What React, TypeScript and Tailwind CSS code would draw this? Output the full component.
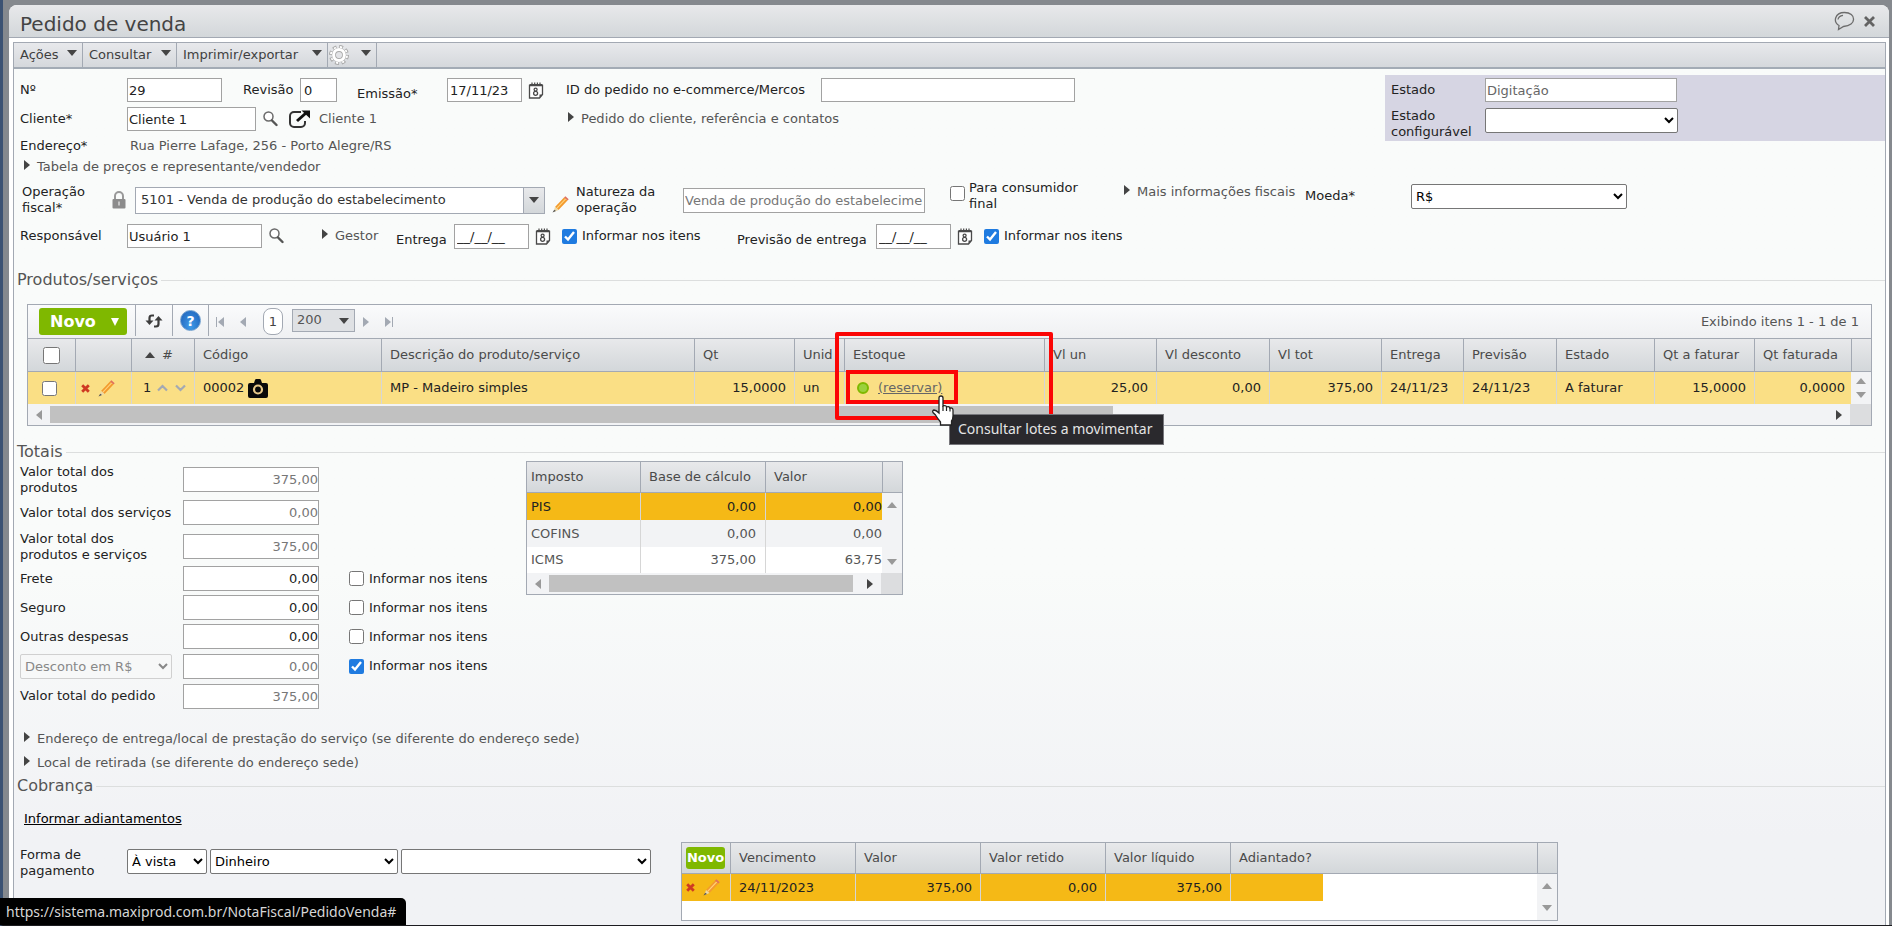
import type { ReactNode } from 'react';

const FIELD = 'border border-[#a2a2a2] bg-white px-px text-[13px] leading-4 text-[#222]';
const SELECT = 'h-[25px] rounded-[2px] border border-[#767676] bg-white text-[13px] text-black';
const CHECK = 'm-0 size-[15px] shrink-0 accent-[#1f7be0]';
const HEAD = 'border-b border-[#a3a9b3] bg-linear-to-b from-[#e8e9eb] to-[#d3d7da] text-left font-normal text-[#4a4a4a]';

/* ---------- icons ---------- */

function Calendar() {
  return (
    <svg width="16" height="17" viewBox="0 0 16 17" fill="none" className="shrink-0">
      <path d="M1.500 3.500h13v9l-3 3.500h-10z" fill="#fff" stroke="#4a4a4a" strokeWidth="1.300" />
      <path d="M1.500 3h13" stroke="#4a4a4a" strokeWidth="2" />
      <path d="M4 .5v3M6.700 .5v3M9.400 .5v3M12 .5v3" stroke="#4a4a4a" strokeWidth="1.200" />
      <path d="M11.500 16v-3.500h3z" fill="#4a4a4a" />
      <circle cx="7.600" cy="7.600" r="1.500" stroke="#4a4a4a" strokeWidth="1.300" />
      <circle cx="7.600" cy="11.300" r="2" stroke="#4a4a4a" strokeWidth="1.300" />
    </svg>
  );
}

function Search() {
  return (
    <svg width="15" height="16" viewBox="0 0 15 16" fill="none" className="shrink-0">
      <circle cx="5.500" cy="5.500" r="4.500" fill="#fff" stroke="#6a6a6a" strokeWidth="1.500" />
      <path d="M9 9.500l4.500 4.500" stroke="#555" strokeWidth="2.400" strokeLinecap="round" />
    </svg>
  );
}

function OpenExternal() {
  return (
    <svg width="22" height="18" viewBox="0 0 22 18" fill="none" className="shrink-0">
      <path d="M12 2H5a4 4 0 0 0-4 4v7a4 4 0 0 0 4 4h7a4 4 0 0 0 4-4v-2" stroke="#333" strokeWidth="2" />
      <path d="M8 11l9-8" stroke="#111" strokeWidth="3" />
      <path d="M12.500 .5H21v8z" fill="#111" />
    </svg>
  );
}

function Pencil() {
  return (
    <svg width="17" height="17" viewBox="0 0 17 17" className="shrink-0">
      <path d="M3 11L12 1.500l3.500 3L6.500 14z" fill="#f39a2d" />
      <path d="M4.700 12.300l9-9.500" stroke="#ffd27a" strokeWidth="1.200" />
      <path d="M12 1.500l1.400-1.200 3.300 2.900-1.200 1.300z" fill="#e0705c" />
      <path d="M3 11l3.500 3-5 2z" fill="#ecd9a8" />
      <path d="M2.200 13.700L4 15l-3.500 1.500z" fill="#555" />
    </svg>
  );
}

function Lock() {
  return (
    <svg width="14" height="18" viewBox="0 0 14 18" fill="none" className="shrink-0">
      <path d="M3 9V5a4 4 0 0 1 8 0v4" stroke="#999" strokeWidth="2" />
      <rect x=".5" y="8" width="13" height="9.500" rx="1" fill="#8c8c8c" />
      <path d="M7 10.500v4" stroke="#d8d8d8" strokeWidth="1.500" />
    </svg>
  );
}

function Gear() {
  return (
    <svg width="20" height="20" viewBox="0 0 20 20" fill="none" className="shrink-0">
      <circle cx="10" cy="10" r="8" stroke="#a8a8a8" strokeWidth="4" strokeDasharray="3.640 2.640" />
      <circle cx="10" cy="10" r="7.500" stroke="#fff" strokeWidth="3" strokeDasharray="2.040 3.850" strokeDashoffset="-.7" />
      <circle cx="10" cy="10" r="5.200" fill="#e2e3e6" stroke="#a8a8a8" strokeWidth="4.200" />
      <circle cx="10" cy="10" r="5.400" stroke="#fff" strokeWidth="3" />
    </svg>
  );
}

function Refresh() {
  return (
    <svg width="18" height="14" viewBox="0 0 18 14" fill="none" className="shrink-0">
      <path d="M9 1.500H7Q4.500 1.500 4.500 4v5" stroke="#3c3c3c" strokeWidth="2.200" />
      <path d="M.5 6.500h8L4.500 11z" fill="#3c3c3c" />
      <path d="M9 12.500h2q2.500 0 2.500-2.500V5" stroke="#3c3c3c" strokeWidth="2.200" />
      <path d="M9.500 6.500h8L13.500 2z" fill="#3c3c3c" />
    </svg>
  );
}

function Camera() {
  return (
    <svg width="20" height="19" viewBox="0 0 20 19" className="shrink-0">
      <path d="M2 4h4l1-3q.3-1 1.300-1h3.400q1 0 1.300 1l1 3h4q2 0 2 2v11q0 2-2 2H2q-2 0-2-2V6q0-2 2-2z" fill="#0a0a0a" />
      <circle cx="10" cy="10.500" r="4" fill="#0a0a0a" stroke="#e8c98a" strokeWidth="2.200" />
    </svg>
  );
}

function RedX() {
  return (
    <svg width="9" height="9" viewBox="0 0 9 9" className="shrink-0">
      <path d="M1.200 1.200l6.600 6.600M7.800 1.200L1.200 7.800" stroke="#cf3a22" strokeWidth="2.800" />
    </svg>
  );
}

function Tri({ dir, color = '#444' }: { dir: 'left' | 'right' | 'up' | 'down'; color?: string }) {
  const paths = { left: 'M6 0v10L0 5z', right: 'M0 0v10l6-5z', up: 'M0 6h10L5 0z', down: 'M0 0h10L5 6z' };
  const wide = dir === 'up' || dir === 'down';
  return (
    <svg width={wide ? 10 : 6} height={wide ? 6 : 10} viewBox={wide ? '0 0 10 6' : '0 0 6 10'} className="shrink-0">
      <path d={paths[dir]} fill={color} />
    </svg>
  );
}

function Hand() {
  return (
    <svg width="24" height="31" viewBox="0 0 24 31" className="pointer-events-none absolute top-[23px] left-[86px] z-30">
      <path
        d="M8 18V3q0-2 2-2t2 2v8q3-1 3.500 1 3-1 3.500 1.200 3-.8 3 2V21q0 3-1.500 5v4H9.500v-3Q7 24 4.500 20L2 17.500q-1-2 1-2.500 2 0 5 3z"
        fill="#fff"
        stroke="#222"
        strokeWidth="1.300"
      />
      <path d="M12 11v5M15.500 12v4M19 13v3.500" stroke="#222" strokeWidth="1.200" />
    </svg>
  );
}

/* ---------- building blocks ---------- */

function MenuButton({ children, width }: { children: ReactNode; width: string }) {
  return (
    <button className={'flex items-center justify-between border-r border-[#a3a9b3] pr-[5px] pl-[6px] text-[#3f3f3f] ' + width}>
      {children}
      <span className="-mt-1">
        <Tri dir="down" />
      </span>
    </button>
  );
}

function Expander({ children }: { children: ReactNode }) {
  return (
    <button className="flex items-center gap-[7px] whitespace-nowrap text-[#555]">
      <span className="-mt-1">
        <Tri dir="right" />
      </span>
      {children}
    </button>
  );
}

function InformarNosItens({ checked = false }: { checked?: boolean }) {
  return (
    <label className="flex w-[144px] items-center gap-[5px] whitespace-nowrap">
      <input type="checkbox" defaultChecked={checked} className={CHECK} />
      Informar nos itens
    </label>
  );
}

function Legend({ children, className }: { children: ReactNode; className: string }) {
  return (
    <h2 className={'flex h-6 items-center gap-[3px] pl-[3px] text-base text-[#555] ' + className}>
      {children}
      <span className="h-px flex-1 bg-[#dcdede]" />
    </h2>
  );
}

function HScroll({ thumb }: { thumb: string }) {
  return (
    <div className="flex h-[21px] bg-[#f2f3f5]">
      <div className="flex flex-1 items-center gap-2 px-2">
        <Tri dir="left" color="#999" />
        <div className="h-[17px] flex-1">
          <div className={'h-full bg-[#c1c1c1] ' + thumb} />
        </div>
        <Tri dir="right" />
      </div>
      <div className="w-[21px] bg-[#dcdddf]" />
    </div>
  );
}

function VScroll({ className = '' }: { className?: string }) {
  return (
    <div className={'flex flex-col items-center justify-between ' + className}>
      <Tri dir="up" color="#999" />
      <Tri dir="down" color="#999" />
    </div>
  );
}

/* ---------- header fields ---------- */

function OrderHeader() {
  return (
    <section>
      <div className="flex items-start justify-between">
        <div className="pt-[9px] pl-[6px]">
          <div className="flex h-6 items-center">
            <label htmlFor="numero" className="w-[107px]">Nº</label>
            <input id="numero" defaultValue="29" className={FIELD + ' h-6 w-[95px]'} />
            <label htmlFor="revisao" className="ml-[21px] w-[57px]">Revisão</label>
            <input id="revisao" defaultValue="0" className={FIELD + ' h-6 w-[37px] pl-[3px]'} />
            <label htmlFor="emissao" className="ml-[20px] w-[90px] pt-2">Emissão*</label>
            <input id="emissao" defaultValue="17/11/23" className={FIELD + ' h-6 w-[75px] pl-[2px]'} />
            <button aria-label="Calendário" className="ml-[6px]"><Calendar /></button>
            <label htmlFor="ecommerce" className="ml-[22px] w-[255px] whitespace-nowrap">ID do pedido no e-commerce/Mercos</label>
            <input id="ecommerce" className={FIELD + ' h-6 w-[254px]'} />
          </div>
          <div className="mt-[5px] flex h-6 items-center">
            <label htmlFor="cliente" className="w-[107px]">Cliente*</label>
            <input id="cliente" defaultValue="Cliente 1" className={FIELD + ' h-6 w-[129px]'} />
            <button aria-label="Buscar cliente" className="ml-[7px]"><Search /></button>
            <button aria-label="Abrir cliente" className="ml-[11px]"><OpenExternal /></button>
            <span className="ml-[8px] w-[249px] text-[#555]">Cliente 1</span>
            <Expander>Pedido do cliente, referência e contatos</Expander>
          </div>
          <div className="mt-[5px] flex h-5 items-center">
            <span className="w-[110px]">Endereço*</span>
            <span className="text-[#555]">Rua Pierre Lafage, 256 - Porto Alegre/RS</span>
          </div>
          <div className="mt-px flex h-5 items-center pl-[4px]">
            <Expander>Tabela de preços e representante/vendedor</Expander>
          </div>
        </div>
        <div className="mt-[6px] flex h-[66px] w-[500px] flex-col gap-[6px] bg-[#d6d5e3] pt-[3px] pl-[6px]">
          <div className="flex items-center">
            <label htmlFor="estado" className="w-[94px]">Estado</label>
            <input id="estado" defaultValue="Digitação" className={FIELD + ' h-6 w-[192px] text-[#666]'} />
          </div>
          <div className="flex items-start">
            <label htmlFor="estado-conf" className="w-[94px]">Estado configurável</label>
            <select id="estado-conf" className={SELECT + ' w-[193px]'} />
          </div>
        </div>
      </div>

      <div className="mt-[7px] flex h-8 items-center pl-[8px]">
        <label htmlFor="operacao" className="w-[90px]">Operação<br />fiscal*</label>
        <Lock />
        <div className="ml-[9px] flex h-[27px] w-[410px] border border-[#a3a9b3] bg-white">
          <input id="operacao" defaultValue="5101 - Venda de produção do estabelecimento" className="min-w-0 flex-1 px-[5px] text-[#333]" />
          <button aria-label="Abrir lista" className="flex w-[21px] items-center justify-center border-l border-[#a3a9b3] bg-linear-to-b from-[#e8e9eb] to-[#d3d7da]">
            <Tri dir="down" />
          </button>
        </div>
        <button aria-label="Editar operação" className="ml-[7px] pt-2"><Pencil /></button>
        <label htmlFor="natureza" className="ml-[7px] w-[107px]">Natureza da<br />operação</label>
        <input id="natureza" defaultValue="Venda de produção do estabelecimento" className={FIELD + ' h-[25px] w-[242px] text-[#777]'} />
        <label className="ml-[25px] flex w-[174px] items-start gap-[4px] self-start">
          <input type="checkbox" className={CHECK + ' mt-[2px]'} />
          <span className="-mt-1 w-[130px]">Para consumidor final</span>
        </label>
        <div className="w-[181px] pb-4"><Expander>Mais informações fiscais</Expander></div>
        <label htmlFor="moeda" className="w-[106px] pb-2">Moeda*</label>
        <div className="pb-2"><select id="moeda" className={SELECT + ' block w-[216px]'}><option>R$</option></select></div>
      </div>

      <div className="mt-[8px] flex h-6 items-center pl-[6px]">
        <label htmlFor="responsavel" className="w-[107px]">Responsável</label>
        <input id="responsavel" defaultValue="Usuário 1" className={FIELD + ' h-6 w-[135px]'} />
        <button aria-label="Buscar responsável" className="ml-[7px]"><Search /></button>
        <div className="ml-[38px] w-[74px]"><Expander>Gestor</Expander></div>
        <label htmlFor="entrega" className="w-[58px] pt-2">Entrega</label>
        <input id="entrega" defaultValue="__/__/__" className={FIELD + ' h-[25px] w-[75px] pl-[2px]'} />
        <button aria-label="Calendário" className="mr-[11px] ml-[6px]"><Calendar /></button>
        <InformarNosItens checked />
        <label htmlFor="previsao" className="ml-[31px] w-[139px] pt-2">Previsão de entrega</label>
        <input id="previsao" defaultValue="__/__/__" className={FIELD + ' h-[25px] w-[75px] pl-[2px]'} />
        <button aria-label="Calendário" className="mr-[11px] ml-[6px]"><Calendar /></button>
        <InformarNosItens checked />
      </div>
    </section>
  );
}

/* ---------- products grid ---------- */

const productCols = [
  'w-[47px]', 'w-[56px]', 'w-[63px]', 'w-[187px]', '', 'w-[100px]', 'w-[50px]', 'w-[200px]', 'w-[112px]',
  'w-[113px]', 'w-[112px]', 'w-[82px]', 'w-[93px]', 'w-[98px]', 'w-[100px]', 'w-[97px]', 'w-[20px]',
];

const productHeads = [
  'Código', 'Descrição do produto/serviço', 'Qt', 'Unid', 'Estoque', 'Vl un', 'Vl desconto', 'Vl tot',
  'Entrega', 'Previsão', 'Estado', 'Qt a faturar', 'Qt faturada',
];

function ProductsGrid() {
  const cell = 'border-l border-[#d6d6d6] px-[8px] whitespace-nowrap';
  const num = cell + ' text-right';
  return (
    <div className="mt-3 mr-[13px] ml-[13px] border border-[#a3a9b3]">
      <div className="flex h-[34px] items-center border-b border-[#a3a9b3] bg-linear-to-b from-[#fafbfc] to-[#eff0f2] pl-[11px]">
        <button className="flex h-[27px] w-[88px] items-center justify-between rounded-[3px] bg-[#7fb800] pr-[8px] pl-[11px] text-base font-bold text-white">
          Novo
          <svg width="8" height="8" viewBox="0 0 8 8">
            <path d="M0 0h8L4 8z" fill="#fff" />
          </svg>
        </button>
        <div className="ml-[8px] flex h-[31px] items-center self-start border-x border-[#a3a9b3] px-[9px]">
          <button aria-label="Atualizar"><Refresh /></button>
        </div>
        <div className="flex h-[31px] items-center self-start border-r border-[#a3a9b3] px-[7px]">
          <button className="flex size-[21px] items-center justify-center rounded-full border border-[#6f9fce] bg-radial-[at_50%_80%] from-[#3f9be8] to-[#1d5fb8] text-sm font-bold text-white">?</button>
        </div>
        <button aria-label="Primeira" className="ml-[7px] flex items-center gap-px">
          <span className="h-[10px] w-px bg-[#a3a9b3]" />
          <Tri dir="left" color="#a3a9b3" />
        </button>
        <button aria-label="Anterior" className="ml-[16px]"><Tri dir="left" color="#a3a9b3" /></button>
        <button className="ml-[17px] h-[27px] w-[20px] rounded-[8px] border border-[#a3a9b3] bg-white text-[#444]">1</button>
        <div className="relative ml-[9px] pb-[3px]">
          <select aria-label="Itens por página" className="block h-[23px] w-[63px] appearance-none border border-[#a3a9b3] bg-[#dfe1e4] pl-[4px] text-[13px] text-[#555]">
            <option>200</option>
          </select>
          <span className="pointer-events-none absolute top-[9px] right-[6px]"><Tri dir="down" /></span>
        </div>
        <button aria-label="Próxima" className="ml-[8px]"><Tri dir="right" color="#a3a9b3" /></button>
        <button aria-label="Última" className="ml-[16px] flex items-center gap-px">
          <Tri dir="right" color="#a3a9b3" />
          <span className="h-[10px] w-px bg-[#a3a9b3]" />
        </button>
        <span className="ml-auto pr-[12px] text-[#555]">Exibindo itens 1 - 1 de 1</span>
      </div>

      <table className="w-full table-fixed border-separate border-spacing-0">
        <colgroup>{productCols.map((w, i) => <col key={i} className={w} />)}</colgroup>
        <thead>
          <tr className="h-[33px]">
            <th className={HEAD}>
              <input type="checkbox" aria-label="Selecionar todos" className="mx-auto block size-[17px]" />
            </th>
            <th className={HEAD + ' border-l'} />
            <th className={HEAD + ' border-l'}>
              <span className="flex items-center gap-[7px] pl-[13px]"><Tri dir="up" />#</span>
            </th>
            {productHeads.map((h) => (
              <th key={h} className={HEAD + ' overflow-hidden border-l px-[8px] whitespace-nowrap'}>{h}</th>
            ))}
            <th className={HEAD + ' border-l'} />
          </tr>
        </thead>
        <tbody>
          <tr className="h-[32px] bg-[#fadf85] text-[#222]">
            <td><input type="checkbox" aria-label="Selecionar item" className={CHECK + ' ml-[14px] block'} /></td>
            <td className="border-l border-[#d6d6d6]">
              <span className="flex items-center gap-[8px] pl-[5px]">
                <button aria-label="Excluir"><RedX /></button>
                <button aria-label="Editar"><Pencil /></button>
              </span>
            </td>
            <td className="border-l border-[#d6d6d6]">
              <span className="flex items-center gap-[6px] pl-[11px]">
                1
                <svg width="29" height="8" viewBox="0 0 29 8" fill="none" stroke="#a3a9b3" strokeWidth="2.200">
                  <path d="M1 6.500l4.500-4.500L10 6.500M19 1.500l4.500 4.500L28 1.500" />
                </svg>
              </span>
            </td>
            <td className={cell}><span className="flex items-center gap-[4px]">00002<Camera /></span></td>
            <td className={cell}>MP - Madeiro simples</td>
            <td className={num}>15,0000</td>
            <td className={cell}>un</td>
            <td className={cell + ' relative'}>
              <span className="flex items-center gap-[9px] pl-[4px]">
                <span className="size-3 rounded-full border-2 border-[#7fb800] bg-[#9bd13c]" />
                <a href="#" className="text-[#666] underline">(reservar)</a>
              </span>
              <div className="pointer-events-none absolute top-[-40px] left-[-10px] z-10 h-[88px] w-[218px] rounded-[2px] border-4 border-[#fb0505]" />
              <div className="pointer-events-none absolute top-[-2px] left-[1px] z-10 h-[34px] w-[112px] border-4 border-[#fb0505]" />
              <div role="tooltip" className="absolute top-[42px] left-[104px] z-20 h-[31px] w-[215px] border border-[#77777c] bg-[#2a292d] pl-[8px] font-['Noto_Sans',sans-serif] text-sm leading-7 text-[#e4e4e4]">
                Consultar lotes a movimentar
              </div>
              <Hand />
            </td>
            <td className={num}>25,00</td>
            <td className={num}>0,00</td>
            <td className={num}>375,00</td>
            <td className={cell}>24/11/23</td>
            <td className={cell}>24/11/23</td>
            <td className={cell}>A faturar</td>
            <td className={num}>15,0000</td>
            <td className="border-l border-[#d6d6d6] pr-[6px] text-right">0,0000</td>
            <td className="bg-[#f2f3f5]"><VScroll className="h-[20px]" /></td>
          </tr>
        </tbody>
      </table>
      <HScroll thumb="w-[59.8%]" />
    </div>
  );
}

/* ---------- totals ---------- */

type Total = { id: string; label: ReactNode; value: string; row: string; dim?: boolean; check?: boolean };

const totals: Total[] = [
  { id: 't-prod', label: <>Valor total dos<br />produtos</>, value: '375,00', row: 'h-[33px]', dim: true },
  { id: 't-serv', label: 'Valor total dos serviços', value: '0,00', row: 'h-[33px]', dim: true },
  { id: 't-ps', label: <>Valor total dos<br />produtos e serviços</>, value: '375,00', row: 'h-[35px]', dim: true },
  { id: 't-frete', label: 'Frete', value: '0,00', row: 'h-[29px]', check: false },
  { id: 't-seguro', label: 'Seguro', value: '0,00', row: 'h-[29px]', check: false },
  { id: 't-outras', label: 'Outras despesas', value: '0,00', row: 'h-[29px]', check: false },
  { id: 't-desc', label: '', value: '0,00', row: 'h-[30px]', dim: true, check: true },
  { id: 't-pedido', label: 'Valor total do pedido', value: '375,00', row: 'h-[30px]', dim: true },
];

const taxes = [
  { name: 'PIS', base: '0,00', value: '0,00', row: 'h-[27px] bg-[#f5b916] text-[#222]' },
  { name: 'COFINS', base: '0,00', value: '0,00', row: 'h-[27px] bg-[#f2f3f5] text-[#555]' },
  { name: 'ICMS', base: '375,00', value: '63,75', row: 'h-[26px] bg-white text-[#555]' },
];

function Totals() {
  return (
    <div className="-mt-px flex items-start">
      <div className="w-[512px] pl-[6px]">
        {totals.map((t) => (
          <div key={t.id} className={'flex items-center ' + t.row}>
            {t.label ? (
              <label htmlFor={t.id} className="w-[163px] whitespace-nowrap">{t.label}</label>
            ) : (
              <span className="w-[163px]">
                <select aria-label="Tipo de desconto" disabled className="block h-[25px] w-[152px] rounded-[2px] border border-[#d0d0d0] bg-[#f7f8f8] text-[13px] text-[#888]">
                  <option>Desconto em R$</option>
                </select>
              </span>
            )}
            <input
              id={t.id}
              aria-label={t.label ? undefined : 'Desconto'}
              defaultValue={t.value}
              className={'h-[25px] w-[136px] border border-[#a2a2a2] bg-white text-right ' + (t.dim ? 'text-[#777]' : 'text-[#222]')}
            />
            {t.check !== undefined && <div className="ml-[30px]"><InformarNosItens checked={t.check} /></div>}
          </div>
        ))}
      </div>

      <div className="mt-[-2px] w-[377px] border border-[#a3a9b3]">
        <table className="w-full table-fixed border-separate border-spacing-0">
          <colgroup>
            <col className="w-[113px]" />
            <col className="w-[125px]" />
            <col />
            <col className="w-[20px]" />
          </colgroup>
          <thead>
            <tr className="h-[31px]">
              <th className={HEAD + ' px-[4px]'}>Imposto</th>
              <th className={HEAD + ' border-l px-[8px] whitespace-nowrap'}>Base de cálculo</th>
              <th className={HEAD + ' border-l px-[8px]'}>Valor</th>
              <th className={HEAD + ' border-l'} />
            </tr>
          </thead>
          <tbody>
            {taxes.map((t, i) => (
              <tr key={t.name} className={t.row}>
                <td className="px-[4px]">{t.name}</td>
                <td className="border-l border-[#d6d6d6] px-[9px] text-right">{t.base}</td>
                <td className="border-l border-[#d6d6d6] text-right">{t.value}</td>
                {i === 0 && (
                  <td rowSpan={3} className="bg-[#f2f3f5]"><VScroll className="h-[63px]" /></td>
                )}
              </tr>
            ))}
          </tbody>
        </table>
        <HScroll thumb="w-[98%]" />
      </div>
    </div>
  );
}

/* ---------- billing ---------- */

function Billing() {
  const num = 'border-l border-[#d6d6d6] px-[8px] text-right';
  return (
    <div className="mt-[15px] flex items-start">
      <div className="flex w-[667px] items-center pt-[5px] pl-[6px]">
        <label htmlFor="forma" className="w-[107px]">Forma de<br />pagamento</label>
        <div className="flex gap-[3px] pb-[3px]">
          <select id="forma" className={SELECT + ' w-[80px]'}><option>À vista</option></select>
          <select aria-label="Meio de pagamento" className={SELECT + ' w-[188px]'}><option>Dinheiro</option></select>
          <select aria-label="Conta" className={SELECT + ' w-[250px]'} />
        </div>
      </div>
      <div className="w-[877px] border border-[#a3a9b3] bg-white">
        <table className="w-full table-fixed border-separate border-spacing-0">
          <colgroup>
            <col className="w-[48px]" />
            <col className="w-[125px]" />
            <col className="w-[125px]" />
            <col className="w-[125px]" />
            <col className="w-[125px]" />
            <col className="w-[93px]" />
            <col />
            <col className="w-[20px]" />
          </colgroup>
          <thead>
            <tr className="h-[31px]">
              <th className={HEAD}>
                <button className="ml-[4px] block h-[22px] w-[39px] rounded-[3px] bg-[#7fb800] text-center text-[13px] font-bold text-white">Novo</button>
              </th>
              {['Vencimento', 'Valor', 'Valor retido', 'Valor líquido'].map((h) => (
                <th key={h} className={HEAD + ' border-l px-[8px]'}>{h}</th>
              ))}
              <th colSpan={2} className={HEAD + ' border-l px-[8px]'}>Adiantado?</th>
              <th className={HEAD + ' border-l'} />
            </tr>
          </thead>
          <tbody>
            <tr className="h-[27px] bg-[#f5b916] text-[#222]">
              <td>
                <span className="flex items-center gap-[8px] pl-[4px]">
                  <button aria-label="Excluir"><RedX /></button>
                  <button aria-label="Editar"><Pencil /></button>
                </span>
              </td>
              <td className="border-l border-[#d6d6d6] px-[8px]">24/11/2023</td>
              <td className={num}>375,00</td>
              <td className={num}>0,00</td>
              <td className={num}>375,00</td>
              <td className="border-l border-[#d6d6d6]" />
              <td className="bg-white" />
              <td rowSpan={2} className="bg-[#f2f3f5]"><VScroll className="h-[28px]" /></td>
            </tr>
            <tr className="h-[19px]"><td colSpan={7} /></tr>
          </tbody>
        </table>
      </div>
    </div>
  );
}

export default function App() {
  return (
    <div className="relative flex min-h-screen flex-col border-b border-l-[3px] border-b-[#1c1c20] border-l-[#3b5273] bg-[#85898e] pt-[5px] pr-[3px] pl-[6px] font-['DejaVu_Sans',Verdana,sans-serif] text-[13px] leading-4 text-[#222]">
      <div className="flex flex-1 flex-col rounded-t-[8px] bg-white">
        <header className="flex h-[33px] items-center justify-between rounded-t-[8px] border-b border-[#a3a9b3] bg-linear-to-b from-[#e8e9eb] to-[#d3d7da] pr-[14px] pl-[11px]">
          <h1 className="pt-[6px] text-xl text-[#444]">Pedido de venda</h1>
          <div className="flex items-center gap-[9px]">
            <button aria-label="Comentários">
              <svg width="21" height="20" viewBox="0 0 21 20" fill="none" stroke="#6c6c6c" strokeWidth="1.300">
                <path d="M5 14.500C-1 11 .5 1.500 10.500 1.500c12 0 12.500 13.500-1 14L4.500 18.500z" />
                <path d="M4 8.500Q4.500 5 9 4.300" />
              </svg>
            </button>
            <button aria-label="Fechar">
              <svg width="11" height="11" viewBox="0 0 11 11" stroke="#636363" strokeWidth="2.800">
                <path d="M1 1l9 9M10 1L1 10" />
              </svg>
            </button>
          </div>
        </header>

        <main className="mt-[4px] mr-[3px] ml-[4px] flex-1 border border-b-0 border-[#a3a9b3] bg-linear-to-b from-[#f9fbfa] from-60% to-[#f1f2f5] to-90%">
          <nav className="flex h-[26px] border-b-2 border-[#a3abb5] bg-linear-to-b from-[#e8e9ec] to-[#d5d8dc]">
            <MenuButton width="w-[69px]">Ações</MenuButton>
            <MenuButton width="w-[94px]">Consultar</MenuButton>
            <MenuButton width="w-[151px]">Imprimir/exportar</MenuButton>
            <button aria-label="Configurações" className="flex w-[49px] items-center justify-between border-r border-[#a3a9b3] pr-[5px] pl-[1px]">
              <Gear />
              <span className="-mt-1"><Tri dir="down" /></span>
            </button>
          </nav>

          <OrderHeader />
          <Legend className="mt-5">Produtos/serviços</Legend>
          <ProductsGrid />
          <Legend className="mt-[14px]">Totais</Legend>
          <Totals />
          <div className="mt-5 flex flex-col items-start gap-2 pl-[10px]">
            <Expander>Endereço de entrega/local de prestação do serviço (se diferente do endereço sede)</Expander>
            <Expander>Local de retirada (se diferente do endereço sede)</Expander>
          </div>
          <Legend className="mt-[3px]">Cobrança</Legend>
          <div className="mt-[13px] pl-[10px]">
            <a href="#" className="text-black underline">Informar adiantamentos</a>
          </div>
          <Billing />
        </main>
      </div>

      <div className="absolute bottom-0 -left-[3px] h-[27px] rounded-tr-[5px] bg-black pr-[10px] pl-[6px] font-['Noto_Sans',sans-serif] text-sm leading-7 whitespace-nowrap text-[#d6d6d6]">
        https://sistema.maxiprod.com.br/NotaFiscal/PedidoVenda#
      </div>
    </div>
  );
}
